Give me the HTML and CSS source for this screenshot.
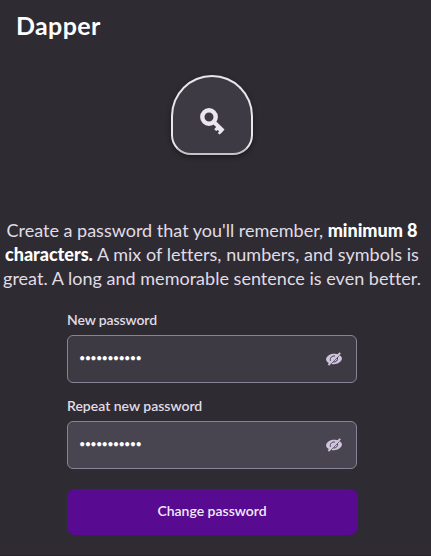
FILE: index.html
```html
<!DOCTYPE html>
<html lang="en">
<head>
<meta charset="utf-8">
<title>Change password</title>
<link rel="stylesheet" href="styles.css">
</head>
<body>
<header class="brand">Dapper</header>
<main>
<div class="badge">
<svg width="28" height="28" viewBox="0 0 28 28"><circle cx="10" cy="10" r="6.7" fill="none" stroke="#ebe6f0" stroke-width="4.4"/><path d="M13.5 16.5L16.5 13.8L25.5 22.5L23.8 24.4L22.4 26L20.5 27.5L18.8 26L20.2 24.4L18.8 23L17.2 24L15.2 22.2L17.1 20Z" fill="#ebe6f0"/></svg>
</div>
<p class="intro">
<span class="line l1">Create a password that you'll remember, <b>minimum 8</b></span>
<span class="line l2"><b>characters.</b> A mix of letters, numbers, and symbols is</span>
<span class="line l3">great. A long and memorable sentence is even better.</span>
</p>
<form class="form">
<div class="label new">New password</div>
<div class="field">
<span class="dots">•••••••••••</span>
<svg class="eye" width="18" height="14" viewBox="0 0 18 14"><path d="M1 7.5C1.6 3.5 6 1.8 9 1.8S16.4 3 17 6.5C16.4 10.5 12 12.2 9 12.2S1.6 11 1 7.5Z" fill="#d0c3e0"/><path d="M5.4 8.8C4.7 5.5 7 3.7 10 4M12.5 5.5C13 8.5 11 10.3 8.3 10" fill="none" stroke="#3d3a44" stroke-width="1"/><path d="M5.2 12.8L14.3 3.6" stroke="#3d3a44" stroke-width=".9"/><path d="M3.4 13L15.2 .9" stroke="#d0c3e0" stroke-width="1.8"/></svg>
</div>
<div class="label repeat">Repeat new password</div>
<div class="field active">
<span class="dots">•••••••••••</span>
<svg class="eye" width="18" height="14" viewBox="0 0 18 14"><path d="M1 7.5C1.6 3.5 6 1.8 9 1.8S16.4 3 17 6.5C16.4 10.5 12 12.2 9 12.2S1.6 11 1 7.5Z" fill="#d0c3e0"/><path d="M5.4 8.8C4.7 5.5 7 3.7 10 4M12.5 5.5C13 8.5 11 10.3 8.3 10" fill="none" stroke="#494550" stroke-width="1"/><path d="M5.2 12.8L14.3 3.6" stroke="#494550" stroke-width=".9"/><path d="M3.4 13L15.2 .9" stroke="#d0c3e0" stroke-width="1.8"/></svg>
</div>
<button class="submit" type="button">Change password</button>
</form>
</main>
</body>
</html>
```
FILE: styles.css
```css
* { box-sizing: border-box; }
body { margin: 0; height: 556px; overflow: hidden; background: #2e2c32; border-bottom: 1px solid #28222a; color: #e1dce6; font-family: Lato, "Liberation Sans", sans-serif; font-variant-ligatures: none; }
.brand { height: 75px; padding: 10px 0 0 16px; font-size: 25px; line-height: 30px; font-weight: 700; letter-spacing: .35px; color: #fff; }
.badge { width: 82px; height: 80px; margin: 0 auto 0 171px; display: flex; align-items: center; justify-content: center; padding: 12px 0 0 1px; border: 2px solid #e9e6ec; border-bottom-color: #c4c3c9; border-radius: 41px 41px 20px 20px; background: #3d3a44; box-shadow: 0 2px 5px #1b191e; }
.intro { margin: 63px 0 0; width: 424px; font-size: 18px; line-height: 24px; text-align: center; }
.line { display: block; white-space: nowrap; }
.l2 { letter-spacing: .04px; }
.l3 { letter-spacing: .02px; }
.intro b { color: #fff; font-weight: 900; letter-spacing: -.03px; }
.form { width: 290px; margin: 21px 0 0 67px; }
.label { font-size: 14px; line-height: 18px; font-weight: 600; }
.label.new { height: 24px; letter-spacing: -.1px; }
.label.repeat { margin-top: 14px; height: 24px; }
.field { height: 48px; padding: 0 14px 0 11px; display: flex; align-items: center; justify-content: space-between; border: 1px solid #898397; border-radius: 6px; background: #3d3a44; color: #fff; }
.field.active { background: #494550; }
.dots { font-size: 11px; line-height: 20px; letter-spacing: -.74px; padding-bottom: 2px; }
.eye { margin-right: -1px; }
.submit { display: block; width: 291px; height: 46px; margin-top: 20px; padding: 0 1px 2px 0; border: 0; border-radius: 8px; background: #580a91; color: #f3eaf9; font: 600 14px/20px Lato, "Liberation Sans", sans-serif; }
```
